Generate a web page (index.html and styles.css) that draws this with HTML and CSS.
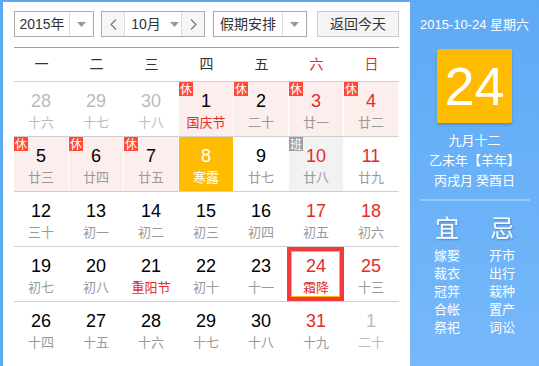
FILE: index.html
```html
<!DOCTYPE html>
<html lang="zh">
<head>
<meta charset="utf-8">
<link rel="stylesheet" href="styles.css">
</head>
<body>
<div class="app">
  <div class="main">
    <div class="controls">
      <div class="select year">
        <span class="label">2015年</span>
        <span class="arrow"><svg width="9" height="5" viewBox="0 0 9 5"><path d="M0 0h9L4.5 5z" fill="#999"/></svg></span>
      </div>
      <div class="month-group">
        <span class="nav"><svg width="7" height="11" viewBox="0 0 7 11"><path d="M6 0.5L1 5.5L6 10.5" fill="none" stroke="#777" stroke-width="1.2"/></svg></span>
        <span class="month"><span class="label">10月</span><svg width="9" height="5" viewBox="0 0 9 5"><path d="M0 0h9L4.5 5z" fill="#999"/></svg></span>
        <span class="nav"><svg width="7" height="11" viewBox="0 0 7 11"><path d="M1 0.5L6 5.5L1 10.5" fill="none" stroke="#777" stroke-width="1.2"/></svg></span>
      </div>
      <div class="select holiday">
        <span class="label">假期安排</span>
        <span class="arrow"><svg width="9" height="5" viewBox="0 0 9 5"><path d="M0 0h9L4.5 5z" fill="#999"/></svg></span>
      </div>
      <div class="today-btn">返回今天</div>
    </div>
    <div class="divider"></div>
    <div class="weekdays">
      <span>一</span><span>二</span><span>三</span><span>四</span><span>五</span><span class="red">六</span><span class="red">日</span>
    </div>
    <div class="grid">
      <div class="row">
        <div class="cell other"><b>28</b><i>十六</i></div>
        <div class="cell other"><b>29</b><i>十七</i></div>
        <div class="cell other"><b>30</b><i>十八</i></div>
        <div class="cell rest"><em class="badge">休</em><b>1</b><i class="fest">国庆节</i></div>
        <div class="cell rest"><em class="badge">休</em><b>2</b><i>二十</i></div>
        <div class="cell rest wk"><em class="badge">休</em><b>3</b><i>廿一</i></div>
        <div class="cell rest wk"><em class="badge">休</em><b>4</b><i>廿二</i></div>
      </div>
      <div class="row">
        <div class="cell rest"><em class="badge">休</em><b>5</b><i>廿三</i></div>
        <div class="cell rest"><em class="badge">休</em><b>6</b><i>廿四</i></div>
        <div class="cell rest"><em class="badge">休</em><b>7</b><i>廿五</i></div>
        <div class="cell term"><b>8</b><i>寒露</i></div>
        <div class="cell"><b>9</b><i>廿七</i></div>
        <div class="cell work wk"><em class="badge gray">班</em><b>10</b><i>廿八</i></div>
        <div class="cell wk"><b>11</b><i>廿九</i></div>
      </div>
      <div class="row">
        <div class="cell"><b>12</b><i>三十</i></div>
        <div class="cell"><b>13</b><i>初一</i></div>
        <div class="cell"><b>14</b><i>初二</i></div>
        <div class="cell"><b>15</b><i>初三</i></div>
        <div class="cell"><b>16</b><i>初四</i></div>
        <div class="cell wk"><b>17</b><i>初五</i></div>
        <div class="cell wk"><b>18</b><i>初六</i></div>
      </div>
      <div class="row">
        <div class="cell"><b>19</b><i>初七</i></div>
        <div class="cell"><b>20</b><i>初八</i></div>
        <div class="cell"><b>21</b><i class="fest">重阳节</i></div>
        <div class="cell"><b>22</b><i>初十</i></div>
        <div class="cell"><b>23</b><i>十一</i></div>
        <div class="cell wk selected"><b>24</b><i class="fest">霜降</i></div>
        <div class="cell wk"><b>25</b><i>十三</i></div>
      </div>
      <div class="row last">
        <div class="cell"><b>26</b><i>十四</i></div>
        <div class="cell"><b>27</b><i>十五</i></div>
        <div class="cell"><b>28</b><i>十六</i></div>
        <div class="cell"><b>29</b><i>十七</i></div>
        <div class="cell"><b>30</b><i>十八</i></div>
        <div class="cell wk"><b>31</b><i>十九</i></div>
        <div class="cell other"><b>1</b><i>二十</i></div>
      </div>
    </div>
  </div>
  <div class="side">
    <div class="date">2015-10-24 星期六</div>
    <div class="bigday">24</div>
    <div class="lunar">
      <div>九月十二</div>
      <div>乙未年【羊年】</div>
      <div>丙戌月 癸酉日</div>
    </div>
    <div class="side-line"></div>
    <div class="yiji">
      <div class="col">
        <div class="head">宜</div>
        <div>嫁娶</div><div>裁衣</div><div>冠笄</div><div>合帐</div><div>祭祀</div>
      </div>
      <div class="col">
        <div class="head">忌</div>
        <div>开市</div><div>出行</div><div>栽种</div><div>置产</div><div>词讼</div>
      </div>
    </div>
  </div>
</div>
</body>
</html>
```
FILE: styles.css
```css
* { box-sizing: border-box; margin: 0; padding: 0; }
html, body { margin: 0; background: #fff; }
body {
  font-family: "Liberation Sans", Arial, "Noto Sans CJK SC", sans-serif;
  color: #333;
}
.app {
  display: flex;
  width: 539px;
  height: 366px;
  overflow: hidden;
}
.main {
  width: 410px;
  border-left: 3px solid #5ea9f4;
  border-top: 2px solid #5ea9f4;
  padding: 9px 11px 0 11px;
}
.controls {
  display: flex;
  height: 26px;
  font-size: 14px;
}
.select {
  display: flex;
  border: 1px solid #aaa;
  background: #fff;
  height: 26px;
}
.select .label {
  flex: 1;
  text-align: center;
  line-height: 24px;
}
.select .arrow {
  width: 24px;
  border-left: 1px solid #ddd;
  display: flex;
  align-items: center;
  justify-content: center;
}
.year { width: 80px; margin-right: 7px; }
.month-group {
  display: flex;
  width: 104px;
  height: 26px;
  border: 1px solid #aaa;
  margin-right: 8px;
}
.nav {
  width: 22px;
  background: #f6f6f6;
  display: flex;
  align-items: center;
  justify-content: center;
}
.month {
  flex: 1;
  border-left: 1px solid #ddd;
  border-right: 1px solid #ddd;
  display: flex;
  align-items: center;
  justify-content: center;
  gap: 9px;
  padding-left: 4px;
}
.month .label { line-height: 24px; }
.holiday { width: 94px; margin-right: 10px; }
.today-btn {
  width: 82px;
  height: 26px;
  border: 1px solid #ccc;
  background: #f5f5f5;
  text-align: center;
  line-height: 24px;
}
.divider {
  height: 1px;
  background: #6cb0f1;
  margin-top: 10px;
}
.weekdays {
  display: grid;
  grid-template-columns: repeat(7, 55px);
  height: 33px;
  line-height: 33px;
  font-size: 14px;
  text-align: center;
  color: #333;
}
.weekdays .red { color: #e42b2b; }
.grid { border-top: 1px solid #cfcfcf; }
.row {
  display: grid;
  grid-template-columns: repeat(7, 55px);
  height: 55px;
  border-bottom: 1px solid #cfcfcf;
}
.row.last { border-bottom: 0; }
.cell {
  position: relative;
  height: 54px;
  border-right: 1px solid transparent;
  background-clip: padding-box;
  text-align: center;
  padding-top: 9px;
}
.cell b {
  display: block;
  font-weight: normal;
  font-size: 18px;
  line-height: 21px;
  color: #000;
}
.cell i {
  display: block;
  font-style: normal;
  font-size: 13px;
  line-height: 19px;
  color: #999;
  font-family: "Noto Sans CJK SC", sans-serif;
}
.cell.wk b { color: #e42b2b; }
.cell i.fest { color: #e42b2b; }
.cell.other b { color: #bbb; }
.cell.other i { color: #bbb; }
.cell.rest { background-color: #fdeeee; }
.cell.work { background-color: #f2f2f2; }
.cell.term { background-color: #ffbb00; }
.cell.term b, .cell.term i { color: #fff; }
.badge {
  position: absolute;
  left: 0;
  top: 0;
  width: 14px;
  height: 14px;
  background: #ff4936;
  color: #fff;
  font-style: normal;
  font-size: 12px;
  line-height: 14px;
  text-align: center;
  font-family: "Noto Sans CJK SC", sans-serif;
}
.badge.gray { background: #a0a0a0; }
.cell.selected::after {
  content: "";
  position: absolute;
  top: 0;
  bottom: 0;
  left: -2px;
  right: -1px;
  border: 4px solid #f23a3a;
  box-shadow: inset 0 0 0 1px #ffbb00;
}
.side {
  flex: 1;
  background: linear-gradient(#5eaaf5, #76b8fa);
  color: #fff;
  text-align: center;
  font-family: "Liberation Sans", Arial, "Noto Sans CJK SC", sans-serif;
  font-size: 13px;
}
.date {
  margin-top: 15px;
  line-height: 20px;
}
.bigday {
  width: 75px;
  height: 74px;
  margin: 14px auto 0;
  background: #ffbb00;
  border-radius: 2px;
  box-shadow: 0 2px 3px rgba(0,0,0,0.18);
  font-size: 54px;
  line-height: 74px;
  color: #fff;
}
.lunar {
  margin-top: 7px;
  line-height: 20px;
  font-family: "Noto Sans CJK SC", sans-serif;
}
.side-line {
  height: 2px;
  margin: 9px 9px 0 10px;
  background: rgba(255,255,255,0.3);
}
.yiji {
  display: flex;
  justify-content: center;
  margin-top: 11px;
  font-family: "Noto Sans CJK SC", sans-serif;
  line-height: 18px;
}
.yiji .col { width: 55px; }
.yiji .head {
  font-size: 24px;
  line-height: 30px;
  margin-bottom: 4px;
  text-shadow: 1px 1px 2px rgba(0,40,90,0.35);
}
```
